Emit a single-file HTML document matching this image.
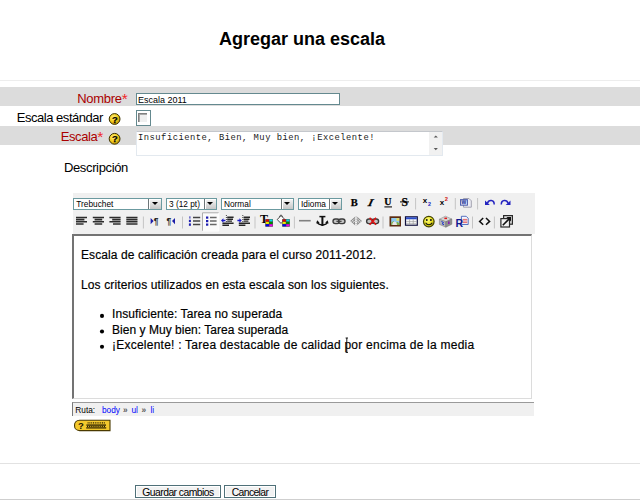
<!DOCTYPE html>
<html lang="es">
<head>
<meta charset="utf-8">
<title>Agregar una escala</title>
<style>
html,body{margin:0;padding:0;background:#fff;}
body{width:640px;height:500px;position:relative;overflow:hidden;font-family:"Liberation Sans",Arial,sans-serif;color:#000;}
.abs{position:absolute;}
h2{position:absolute;left:0;top:28px;width:604px;margin:0;text-align:center;font-size:18px;line-height:22px;font-weight:bold;}
.hr{position:absolute;left:0;width:640px;height:1px;background:#e2e2e2;}
.band{position:absolute;left:0;width:640px;background:#dcdcdc;}
.lbl{position:absolute;font-size:13px;line-height:16px;white-space:nowrap;text-align:right;letter-spacing:-0.35px;}
.req{color:#a00;}
.req span{color:#f02828;font-size:15.5px;line-height:0;position:relative;top:0.8px;letter-spacing:0;}
.txt{position:absolute;box-sizing:border-box;border:1px solid #64898f;background:#fff;font-size:9px;line-height:11px;padding:1px 0 0 1px;white-space:nowrap;overflow:hidden;}
.ta{position:absolute;box-sizing:border-box;border:1px solid #e3e9ef;border-top-color:#c4c7cc;background:#fff;font-family:"Liberation Mono",monospace;font-size:8.8px;letter-spacing:0.5px;color:#1a1a1a;line-height:11px;}
.btn{position:absolute;box-sizing:border-box;border:1px solid #4f7078;background:#f2f2f2;font-size:10.4px;line-height:11px;padding-top:1px;text-align:center;white-space:nowrap;box-shadow:inset 0 0 0 1px #fff;letter-spacing:-0.3px;}
.tb{position:absolute;left:73px;top:193px;width:462px;height:41px;background:#f0f0f0;}
.sel{position:absolute;box-sizing:border-box;height:12.2px;top:197.6px;border:1px solid #6b9aa0;background:#fff;font-size:8.3px;line-height:10px;white-space:nowrap;overflow:hidden;}
.sel span{position:absolute;left:2px;top:0;}
.sel i{position:absolute;right:-1px;top:-1px;width:13.4px;height:12px;box-sizing:border-box;border:1px solid #6e7678;background:linear-gradient(#f6f6f6,#c6c6c6);box-shadow:inset 1px 1px 0 #fff;}
.sel i:after{content:"";position:absolute;left:2.5px;top:3.3px;border:3px solid transparent;border-top:3.4px solid #000;border-bottom:0;}
.ed{position:absolute;left:72px;top:234px;width:460px;height:165px;box-sizing:border-box;background:#fff;border:1px solid #dcdcdc;border-top:2px solid #737373;border-left:2px solid #737373;}
.et{position:absolute;font-size:12px;line-height:15px;white-space:nowrap;color:#000;-webkit-text-stroke:0.18px #000;}
.status{position:absolute;left:72px;top:402px;width:462px;height:14px;box-sizing:border-box;border-top:1px solid #9a9a9a;border-left:1.5px solid #7a7a7a;background:#f0f0f0;font-size:8.3px;line-height:13px;white-space:nowrap;}
.status span{position:absolute;top:1px;}
.status .l{color:#0000ff;}
.status .g{color:#5a5a5a;font-weight:bold;}
svg{position:absolute;left:0;top:0;}
</style>
</head>
<body>
<h2>Agregar una escala</h2>
<div class="hr" style="top:79.5px;background:#ededed"></div>
<div class="band" style="top:87px;height:19px"></div>
<div class="band" style="top:126px;height:19px"></div>

<div class="lbl req" style="right:512.3px;top:91px;letter-spacing:-0.3px">Nombre<span>*</span></div>
<div class="txt" style="left:136px;top:92.5px;width:204px;height:12.8px;padding-top:1.5px">Escala 2011</div>

<div class="lbl" style="right:537px;top:110px;letter-spacing:-0.46px">Escala estándar</div>
<div class="lbl req" style="right:536.6px;top:129px;letter-spacing:-0.4px">Escala<span>*</span></div>
<div class="lbl" style="right:512px;top:160px">Descripción</div>

<!-- checkbox -->
<div class="abs" style="left:136px;top:110px;width:15px;height:16px;box-sizing:border-box;border:1px solid #64898f;background:#fff"></div>
<div class="abs" style="left:138px;top:113px;width:9px;height:9px;box-sizing:border-box;border-top:1px solid #808080;border-left:1px solid #808080;background:#efefef;box-shadow:inset 1px 1px 0 #a8a8a8"></div>

<div class="ta" style="left:136px;top:131px;width:307px;height:25px"><span class="abs" style="left:1px;top:1px;white-space:nowrap">Insuficiente, Bien, Muy bien, ¡Excelente!</span>
<div class="abs" style="right:0;top:0;width:13px;height:23px;background:#f1f1f1"></div></div>

<!-- editor -->
<div class="tb"></div>
<div class="sel" style="left:73.3px;width:88.4px"><span style="left:2px">Trebuchet</span><i></i></div>
<div class="sel" style="left:166px;width:51px"><span>3 (12 pt)</span><i></i></div>
<div class="sel" style="left:221px;width:73px"><span>Normal</span><i></i></div>
<div class="sel" style="left:298px;width:44px"><span>Idioma</span><i></i></div>

<div class="ed"></div>
<div class="et" style="left:81px;top:248px;letter-spacing:0.085px">Escala de calificación creada para el curso 2011-2012.</div>
<div class="et" style="left:81px;top:278px;letter-spacing:0.12px">Los criterios utilizados en esta escala son los siguientes.</div>
<div class="et" style="left:112px;top:307px;letter-spacing:0.1px">Insuficiente: Tarea no superada</div>
<div class="et" style="left:112px;top:323px;letter-spacing:0.03px">Bien y Muy bien: Tarea superada</div>
<div class="et" style="left:112px;top:338px;letter-spacing:0.235px">¡Excelente! : Tarea destacable de calidad por encima de la media</div>

<div class="status"><span style="left:2.3px">Ruta:</span><span class="l" style="left:29px">body</span><span class="g" style="left:50px">»</span><span class="l" style="left:58.4px">ul</span><span class="g" style="left:68.5px">»</span><span class="l" style="left:77.4px">li</span></div>

<div class="hr" style="top:463.3px"></div>
<div class="hr" style="top:499px;background:#cfcfcf"></div>
<div class="btn" style="left:135px;top:485px;width:86px;height:13px;letter-spacing:-0.55px">Guardar cambios</div>
<div class="btn" style="left:224px;top:485px;width:52px;height:13px;letter-spacing:-0.62px">Cancelar</div>

<svg width="640" height="500" viewBox="0 0 640 500">
<!--ICONS_START-->
<defs>
<radialGradient id="yg" cx="0.4" cy="0.35" r="0.7"><stop offset="0" stop-color="#fff27a"/><stop offset="0.55" stop-color="#f2cc1e"/><stop offset="1" stop-color="#b88a00"/></radialGradient>
<radialGradient id="sm" cx="0.4" cy="0.35" r="0.7"><stop offset="0" stop-color="#ffff80"/><stop offset="0.6" stop-color="#e8e020"/><stop offset="1" stop-color="#a8a000"/></radialGradient>
</defs>
<!-- help icons -->
<g font-family="Liberation Sans, sans-serif" font-weight="bold" font-size="9.4" text-anchor="middle" stroke="#000" stroke-width="0.25">
<circle cx="114.6" cy="119" r="5.4" fill="url(#yg)" stroke="#3c3200" stroke-width="1"/><text x="114.8" y="122.5">?</text>
<circle cx="114.6" cy="138.8" r="5.4" fill="url(#yg)" stroke="#3c3200" stroke-width="1"/><text x="114.8" y="142.3">?</text>
</g>
<!-- textarea scroll arrows -->
<path d="M433.7 137.6 L435.8 135.4 L437.9 137.6 Z M433.7 148 L435.8 150.2 L437.9 148 Z" fill="#5a5a5a"/>
<!-- separators -->
<g stroke="#c4c4c4" stroke-width="1">
<path d="M415.6 198v11.5M455.3 198v11.5M477.6 198v11.5"/>
<path d="M143.4 216.5v12M182.5 216.5v12M255 216.5v12M294.4 216.5v12M383 216.5v12M472.5 216.5v12M494.4 216.5v12"/>
</g>
<!-- row1: B I U S -->
<g font-family="Liberation Serif, serif" font-weight="bold" font-size="10.5" fill="#000" stroke="#000" stroke-width="0.25">
<text x="350.8" y="205.6">B</text>
<text x="0" y="0" font-style="italic" transform="translate(367.6 205.6) skewX(-14) scale(1.15 1)">I</text>
<text x="384.2" y="205.2" font-size="10">U</text>
<text x="401.4" y="206" font-size="11.6">S</text>
</g>
<path d="M384.4 206.9h7.6" stroke="#222" stroke-width="1.2"/>
<path d="M400 201.9h9" stroke="#000" stroke-width="1"/>
<!-- sub / sup -->
<g font-family="Liberation Sans, sans-serif" font-weight="bold">
<text x="422.7" y="203.1" font-size="8">x</text><text x="428" y="205.7" font-size="5.4" fill="#2020c0">2</text>
<text x="439.8" y="205.1" font-size="8">x</text><text x="444.8" y="201.4" font-size="5.8" fill="#d01010">2</text>
</g>
<!-- word clean -->
<path d="M463.5 198.5h5.5l2.3 2.3v6.4h-7.8z" fill="#ececf4" stroke="#9a9aa8" stroke-width="0.9"/>
<rect x="460.5" y="199.6" width="7" height="5.6" fill="#c8d0f0" stroke="#4858a8" stroke-width="0.9"/>
<text x="461.6" y="204.4" font-family="Liberation Sans, sans-serif" font-weight="bold" font-size="5" fill="#203090">W</text>
<!-- undo / redo -->
<g fill="none" stroke="#2424c0" stroke-width="1.5">
<path d="M487.5 203.2 C488.5 199.6 494.3 199.2 494.2 204.6"/>
<path d="M508 203.2 C507 199.6 501.2 199.2 501.3 204.6"/>
</g>
<path d="M485 200.6 L485 205 L489.8 205 Z M510.5 200.6 L510.5 205 L505.7 205 Z" fill="#2424c0"/>
<!-- row2 align -->
<g stroke="#2c2c2c" stroke-width="1.55">
<path d="M76 217.4h11M76 219.6h8.4M76 221.8h11M76 224h7.6"/>
<path d="M92.8 217.4h11.2M94.6 219.6h7.6M92.8 221.8h11.2M94.6 224h7.6"/>
<path d="M109.4 217.4h11.2M112.2 219.6h8.4M109.4 221.8h11.2M113 224h7.6"/>
<path d="M126.3 217.4h11.2M126.3 219.6h11.2M126.3 221.8h11.2M126.3 224h11.2"/>
</g>
<!-- ltr / rtl -->
<path d="M150.6 217.9 L153.6 221.1 L150.6 224.3 Z" fill="#1c1ca8"/>
<text x="153.8" y="223.9" font-family="Liberation Sans, sans-serif" font-weight="bold" font-size="8.4" fill="#222">¶</text>
<text x="166.4" y="223.9" font-family="Liberation Sans, sans-serif" font-weight="bold" font-size="8.4" fill="#222">¶</text>
<path d="M175 217.9 L172 221.1 L175 224.3 Z" fill="#1c1ca8"/>
<!-- ordered list -->
<g fill="#2020b0"><rect x="189.4" y="216.3" width="1" height="2.3"/><rect x="188.9" y="219.8" width="2" height="2.3"/><rect x="188.9" y="223.4" width="2" height="2.4"/></g>
<path d="M193 217.6h7.2M193 221.1h7.2M193 224.6h7.2" stroke="#444" stroke-width="1.5"/>
<!-- unordered list (active) -->
<rect x="202.5" y="212.8" width="16.2" height="18" fill="#fbfbfb"/>
<path d="M202.5 231 V212.8 H218.8" fill="none" stroke="#a6a6a6" stroke-width="0.9"/>
<path d="M202.5 231 H218.8 V212.8" fill="none" stroke="#ffffff" stroke-width="0.9"/>
<g fill="#1c1cb0"><rect x="206" y="216.5" width="2.3" height="2.2"/><rect x="206" y="220" width="2.3" height="2.2"/><rect x="206" y="223.5" width="2.3" height="2.2"/></g>
<path d="M210 217.6h6.6M210 221.1h6.6M210 224.6h6.6" stroke="#686868" stroke-width="1.5"/>
<!-- outdent -->
<path d="M226.4 215v12" stroke="#444" stroke-width="1" stroke-dasharray="1 1"/>
<g stroke="#262626" stroke-width="1.35"><path d="M227.2 217.2h6.4M227.2 219.2h5.8M227.2 221.1h4.8M222.4 223.2h11.2M222.4 225.2h6.6"/></g>
<path d="M221 220.5 L223.4 218.3 L223.4 219.8 L225.4 219.8 L225.4 221.2 L223.4 221.2 L223.4 222.7 Z" fill="#1818c8"/>
<!-- indent -->
<path d="M242.8 215v12" stroke="#444" stroke-width="1" stroke-dasharray="1 1"/>
<g stroke="#262626" stroke-width="1.35"><path d="M243.6 217.2h6.4M243.6 219.2h5.8M243.6 221.1h4.8M238.8 223.2h11.2M238.8 225.2h6.6"/></g>
<path d="M241.8 220.5 L239.4 218.3 L239.4 219.8 L237.4 219.8 L237.4 221.2 L239.4 221.2 L239.4 222.7 Z" fill="#1818c8"/>
<!-- forecolor -->
<text x="260" y="222.8" font-family="Liberation Serif, serif" font-weight="bold" font-size="12">T</text>
<g transform="translate(265.7 219.5)"><rect x="-0.4" y="-0.4" width="7.6" height="7.6" fill="#444"/><rect x="0" y="0" width="3.2" height="2" fill="#e80000"/><rect x="3.7" y="0" width="3.1" height="2" fill="#00e0e8"/><rect x="0" y="2.4" width="3.2" height="2" fill="#f0f000"/><rect x="3.7" y="2.4" width="3.1" height="2" fill="#008a00"/><rect x="0" y="4.8" width="3.2" height="2" fill="#0000f0"/><rect x="3.7" y="4.8" width="3.1" height="2" fill="#f000f0"/></g>
<!-- backcolor -->
<path d="M277.2 219.6 L281 215.6 L285 219.6 L281 223.4 Z" fill="#fafafa" stroke="#333" stroke-width="0.9"/>
<path d="M279.5 217 C279.5 214.6 282.5 214.6 282.5 217" fill="none" stroke="#333" stroke-width="0.8"/>
<g transform="translate(282.6 219.5)"><rect x="-0.4" y="-0.4" width="7.6" height="7.6" fill="#444"/><rect x="0" y="0" width="3.2" height="2" fill="#e80000"/><rect x="3.7" y="0" width="3.1" height="2" fill="#00e0e8"/><rect x="0" y="2.4" width="3.2" height="2" fill="#f0f000"/><rect x="3.7" y="2.4" width="3.1" height="2" fill="#008a00"/><rect x="0" y="4.8" width="3.2" height="2" fill="#0000f0"/><rect x="3.7" y="4.8" width="3.1" height="2" fill="#f000f0"/></g>
<!-- hr -->
<path d="M299 220.7h11.7" stroke="#808080" stroke-width="1.6"/>
<!-- anchor -->
<g fill="none" stroke="#111">
<path d="M319.4 216.6h6" stroke-width="1.5"/>
<path d="M322.4 216v10" stroke-width="2"/>
<path d="M317.4 221.8 C317.8 226 327 226 327.4 221.8" stroke-width="1.5"/>
</g>
<path d="M316.2 223.4 L317.2 220.2 L319.6 222.8 Z M328.6 223.4 L327.6 220.2 L325.2 222.8 Z" fill="#111"/>
<!-- link -->
<g fill="#c4c4c4" stroke="#3c3c3c" stroke-width="1.4">
<rect x="333" y="219" width="6.4" height="4.6" rx="2.3"/><rect x="338.6" y="219" width="6.4" height="4.6" rx="2.3"/>
</g>
<path d="M336.4 221.3h5.2" stroke="#3c3c3c" stroke-width="1.2"/>
<!-- broken link (gray) -->
<path d="M350.2 221 L355 216.8 L355 225.2 Z M362 221 L357.2 216.8 L357.2 225.2 Z" fill="#8c8c8c"/>
<path d="M351 222.4 L355 218.4M352.4 223.6 L355 221M351.6 219.6l2 2M361.2 222.4 L357.2 218.4M359.8 223.6 L357.2 221M360.6 219.6l-2 2" stroke="#e8e8e8" stroke-width="0.7" fill="none"/>
<path d="M356.1 216.4v9.2" stroke="#9a9a9a" stroke-width="0.9" stroke-dasharray="1.2 1"/>
<!-- unlink -->
<g fill="#c4c4c4" stroke="#3c3c3c" stroke-width="1.4">
<rect x="366.6" y="219" width="6.4" height="4.6" rx="2.3"/><rect x="372.2" y="219" width="6.4" height="4.6" rx="2.3"/>
</g>
<path d="M369.6 217.8 L376 224.8M376 217.8 L369.6 224.8" stroke="#e01010" stroke-width="1.5"/>
<!-- image -->
<rect x="389.5" y="216.3" width="11.5" height="10.2" fill="#5c2c10"/>
<rect x="391.2" y="218" width="8.2" height="6.9" fill="#8ccaf2"/>
<path d="M391.2 224.9 L391.2 222.8 L393.4 221 L395.6 223.2 L397.4 221.8 L399.4 223.4 L399.4 224.9 Z" fill="#7eb048"/>
<rect x="396.4" y="218.2" width="2.8" height="2.6" fill="#e6e060"/>
<path d="M392.2 224.9 C392.4 220.4 396.6 220.4 397 224.9 Z" fill="#e6e6e6"/>
<!-- table -->
<rect x="405.5" y="216.8" width="11.8" height="8.4" fill="#fff" stroke="#10103c" stroke-width="1.2"/>
<rect x="406" y="217.3" width="10.8" height="2" fill="#2a4cc8"/>
<path d="M406 221.4h10.8M406 223.3h10.8M409.6 219.3v5.6M413.2 219.3v5.6" stroke="#9c9c9c" stroke-width="0.7"/>
<!-- smiley -->
<circle cx="428.8" cy="221.6" r="5.3" fill="url(#sm)" stroke="#444400" stroke-width="1.2"/>
<circle cx="426.8" cy="220" r="0.95" fill="#111"/><circle cx="430.9" cy="220" r="0.95" fill="#111"/>
<path d="M425.6 222.8 C427 225.4 430.8 225.4 432.2 222.8" fill="none" stroke="#111" stroke-width="1.1"/>
<!-- cube -->
<path d="M439.4 219.2 L445.4 216.2 L451.8 219 L445.8 221.8 Z" fill="#d4d4d4" stroke="#7a7a7a" stroke-width="0.5"/>
<path d="M439.4 219.2 L445.8 221.8 L445.8 227.2 L439.4 224.4 Z" fill="#b4b4b4" stroke="#7a7a7a" stroke-width="0.5"/>
<path d="M451.8 219 L445.8 221.8 L445.8 227.2 L451.8 224.2 Z" fill="#909090" stroke="#6a6a6a" stroke-width="0.5"/>
<rect x="444.4" y="217.6" width="2.6" height="1.5" fill="#e01818"/>
<path d="M441.4 221.4 L443.6 222.6 L442 223.6 L444 224.8" fill="none" stroke="#2038d0" stroke-width="1"/>
<rect x="448" y="221.4" width="1.6" height="2.6" fill="#8a20b0"/>
<!-- R + page -->
<path d="M461.4 216.3h4.8l2 2v6.2h-6.8z" fill="#f4f6ff" stroke="#3050b0" stroke-width="0.8"/>
<path d="M462.6 219.4h4.6M462.6 221h4.6M462.6 222.6h4.6" stroke="#e04040" stroke-width="0.8"/>
<text x="455.6" y="227" font-family="Liberation Sans, sans-serif" font-weight="bold" font-size="10.5" fill="#101890">R</text>
<!-- <> -->
<path d="M483.2 218 L479.6 221.4 L483.2 224.8M486 218 L489.6 221.4 L486 224.8" fill="none" stroke="#111" stroke-width="1.5"/>
<!-- fullscreen -->
<rect x="503.6" y="215.6" width="8.8" height="8.6" fill="#dcdcdc" stroke="#2a2a2a" stroke-width="1.2"/>
<rect x="500.9" y="218.6" width="8.6" height="8.4" fill="#f2f2f2" stroke="#2a2a2a" stroke-width="1.2"/>
<path d="M502.8 225.2 L510.4 217.6" stroke="#111" stroke-width="1.6"/>
<path d="M506.4 217 L511 217 L511 221.6 Z" fill="#111"/>
<!-- keyboard badge -->
<path d="M79.6 420.2 H110 V430.6 H79.6 C72.8 430.6 72.8 420.2 79.6 420.2 Z" fill="#f4c82c" stroke="#4a3a00" stroke-width="1.1"/>
<text x="78" y="429" font-family="Liberation Sans, sans-serif" font-weight="bold" font-size="9.5" fill="#1a1400">?</text>
<g stroke="#2a2000" fill="none">
<path d="M87.6 422.9h17.6" stroke-width="1.4" stroke-dasharray="1 0.8"/>
<path d="M86.4 425.1h19.6" stroke-width="1.3"/>
<path d="M87 426.5h18.6" stroke-width="1" stroke-dasharray="1.2 0.9"/>
<path d="M86.2 427.9h20" stroke-width="1.2"/>
</g>
<!-- I-beam cursor -->
<path d="M346.8 338v14.4M345.6 338h2.4M345.6 352.4h2.4" stroke="#000" stroke-width="0.9" fill="none"/>
<!-- bullets -->
<circle cx="102" cy="315.9" r="2.05" fill="#000"/><circle cx="102" cy="331.5" r="2.05" fill="#000"/><circle cx="102" cy="346.7" r="2.05" fill="#000"/>
<!--ICONS_END-->
</svg>
</body>
</html>
